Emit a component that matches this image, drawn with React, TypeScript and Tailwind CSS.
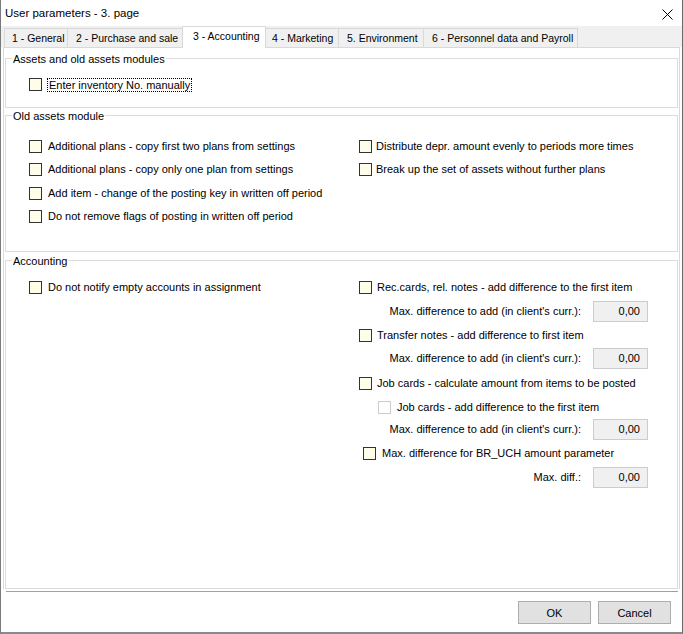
import React from "react";

const Cb = ({ disabled = false }: { disabled?: boolean }) => (
  <span
    className={
      disabled
        ? "block w-[13px] h-[13px] shrink-0 border border-[#cccccc] bg-white"
        : "block w-[13px] h-[13px] shrink-0 border border-[#333333] bg-[#fdfde9]"
    }
  />
);

const Row = ({
  label,
  className = "",
  gap = "ml-[6px]",
  disabled = false,
}: {
  label: string;
  className?: string;
  gap?: string;
  disabled?: boolean;
}) => (
  <div className={"flex items-center h-[13px] " + className}>
    <Cb disabled={disabled} />
    <span className={"leading-[13px] whitespace-nowrap " + gap}>{label}</span>
  </div>
);

const Amount = ({ label, className = "" }: { label: string; className?: string }) => (
  <div className={"flex items-center justify-end h-[21px] mr-[29px] " + className}>
    <span className="whitespace-nowrap leading-[13px]">{label}</span>
    <div className="ml-[12px] w-[55px] h-[21px] bg-[#f0f0f0] border border-[#cccccc] flex items-center justify-end pr-[7px]">
      0,00
    </div>
  </div>
);

const Group = ({
  title,
  className,
  children,
}: {
  title: string;
  className: string;
  children: React.ReactNode;
}) => (
  <div className={"mx-[1px] border border-[#dcdcdc] flex flex-col " + className}>
    <div className="-mt-[7px] ml-[6px] px-[1px] w-fit bg-white leading-[14px] whitespace-nowrap">
      {title}
    </div>
    {children}
  </div>
);

const tabs = [
  { label: "1 - General", cls: "w-[63px] h-[19px] pl-[7px] border-l border-t border-[#d9d9d9] bg-[#f0f0f0]" },
  { label: "2 - Purchase and sale", cls: "w-[115px] h-[19px] pl-[8px] border-l border-t border-[#d9d9d9] bg-[#f0f0f0]" },
  {
    label: "3 - Accounting",
    cls: "w-[84px] h-[22px] pl-[10px] pb-[3px] border-l border-t border-r border-[#d9d9d9] bg-white relative z-10 -mb-[1px]",
  },
  { label: "4 - Marketing", cls: "w-[72px] h-[19px] pl-[6px] border-t border-[#d9d9d9] bg-[#f0f0f0]" },
  { label: "5. Environment", cls: "w-[85px] h-[19px] pl-[8px] border-l border-t border-[#d9d9d9] bg-[#f0f0f0]" },
  {
    label: "6 - Personnel data and Payroll",
    cls: "w-[155px] h-[19px] pl-[8px] border-l border-t border-r border-[#d9d9d9] bg-[#f0f0f0]",
  },
];

export default function App() {
  return (
    <div className="w-[683px] h-[634px] bg-white border-l border-r border-b-2 border-l-[#7a7a7a] border-r-[#6a6a6a] border-b-[#8a8a8a] flex flex-col font-['Liberation_Sans',Arial,sans-serif] text-[11px] text-black overflow-hidden">
      {/* Title bar */}
      <div className="h-[26px] shrink-0 flex items-center justify-between pl-[4px] pr-[9px]">
        <span className="text-[11.5px] leading-[14px] mt-[-1px]">User parameters - 3. page</span>
        <svg width="11" height="11" viewBox="0 0 11 11" className="mt-[2px]">
          <path d="M0.5 0.5 L10.5 10.5 M10.5 0.5 L0.5 10.5" stroke="#000" strokeWidth="1" />
        </svg>
      </div>

      {/* Tab strip */}
      <div className="h-[21px] shrink-0 bg-[#f0f0f0] flex items-end pl-[3px]">
        {tabs.map((t) => (
          <div
            key={t.label}
            className={"flex items-center whitespace-nowrap text-[10.5px] leading-[14px] " + t.cls}
          >
            {t.label}
          </div>
        ))}
      </div>

      {/* Tab page */}
      <div className="ml-[2px] mr-[2px] h-[542px] shrink-0 border-l border-r border-t border-[#d9d9d9] flex flex-col pt-[10px]">
        <Group title="Assets and old assets modules" className="h-[50px] shrink-0">
          <div className="flex items-center h-[13px] mt-[12px] ml-[23px]">
            <Cb />
            <span className="ml-[5px] h-[14px] px-[1px] border border-dotted border-black leading-[12px] whitespace-nowrap">
              Enter inventory No. manually
            </span>
          </div>
        </Group>

        <Group title="Old assets module" className="h-[137px] shrink-0 mt-[7px]">
          <div className="flex">
            <div className="w-[353px] pl-[23px] flex flex-col">
              <Row className="mt-[17px]" label="Additional plans - copy first two plans from settings" />
              <Row className="mt-[10px]" label="Additional plans - copy only one plan from settings" />
              <Row className="mt-[11px]" label="Add item - change of the posting key in written off period" />
              <Row className="mt-[10px]" label="Do not remove flags of posting in written off period" />
            </div>
            <div className="flex-1 flex flex-col">
              <Row className="mt-[17px]" gap="ml-[4px]" label="Distribute depr. amount evenly to periods more times" />
              <Row className="mt-[10px]" gap="ml-[4px]" label="Break up the set of assets without further plans" />
            </div>
          </div>
        </Group>

        <Group title="Accounting" className="h-[329px] shrink-0 mt-[8px]">
          <div className="flex">
            <div className="w-[353px] pl-[23px] flex flex-col">
              <Row className="mt-[13px]" label="Do not notify empty accounts in assignment" />
            </div>
            <div className="flex-1 flex flex-col">
              <Row className="mt-[13px]" gap="ml-[5px]" label="Rec.cards, rel. notes - add difference to the first item" />
              <Amount className="mt-[7px]" label="Max. difference to add (in client's curr.):" />
              <Row className="mt-[7px]" gap="ml-[5px]" label="Transfer notes - add difference to first item" />
              <Amount className="mt-[6px]" label="Max. difference to add (in client's curr.):" />
              <Row className="mt-[8px]" gap="ml-[5px]" label="Job cards - calculate amount from items to be posted" />
              <Row className="mt-[11px] ml-[19px]" gap="ml-[6px]" disabled label="Job cards - add difference to the first item" />
              <Amount className="mt-[5px]" label="Max. difference to add (in client's curr.):" />
              <Row className="mt-[7px] ml-[4px]" gap="ml-[6px]" label="Max. difference for BR_UCH amount parameter" />
              <Amount className="mt-[7px]" label="Max. diff.:" />
            </div>
          </div>
        </Group>
      </div>

      {/* Separator */}
      <div className="mt-[2px] ml-[5px] w-[672px] h-[1px] bg-[#a0a0a0] shrink-0" />

      {/* Buttons */}
      <div className="mt-[9px] flex justify-end gap-[7px] pr-[11px] shrink-0">
        <button className="w-[73px] h-[23px] bg-[#e1e1e1] border border-[#adadad] leading-[14px]">OK</button>
        <button className="w-[73px] h-[23px] bg-[#e1e1e1] border border-[#adadad] leading-[14px]">Cancel</button>
      </div>
    </div>
  );
}
